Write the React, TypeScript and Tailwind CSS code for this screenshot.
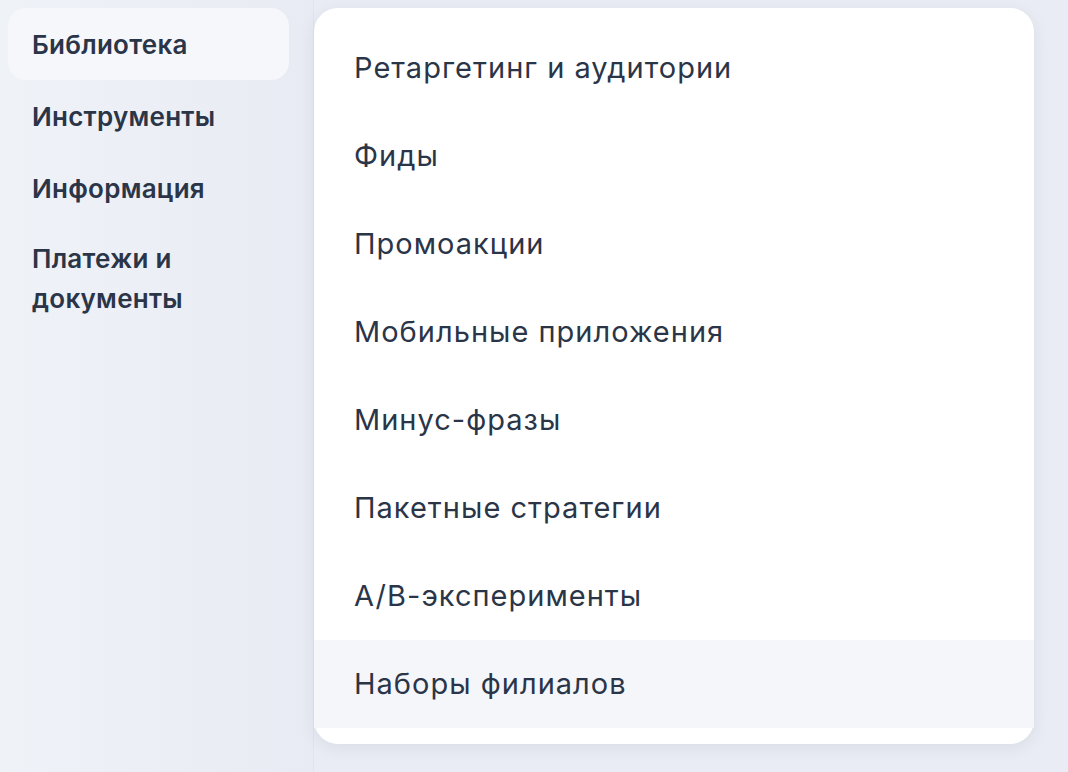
import React from "react";

const side = ["Библиотека", "Инструменты", "Информация"];
const items = [
  "Ретаргетинг и аудитории",
  "Фиды",
  "Промоакции",
  "Мобильные приложения",
  "Минус-фразы",
  "Пакетные стратегии",
  "A/B-эксперименты",
  "Наборы филиалов",
];

export default function App() {
  return (
    <div
      className="flex h-[772px] w-[1068px] overflow-hidden bg-[#e9ecf4] text-[#2b3548]"
      style={{ fontFamily: "Inter, 'Noto Sans', sans-serif" }}
    >
      <aside className="flex w-[314px] shrink-0 flex-col border-r border-[#e0e4ec] bg-gradient-to-r from-[#eff2f7] to-[#e8ebf3] p-2 pr-6">
        {side.map((s, i) => (
          <div
            key={s}
            className={
              "flex h-[72px] items-center rounded-[18px] px-6 text-[26px] font-semibold tracking-[0.01em] " +
              (i === 0 ? "bg-[#f5f7fb]" : "")
            }
          >
            {s}
          </div>
        ))}
        <div className="px-6 pt-[15px] text-[26px] font-semibold leading-[40px] tracking-[0.01em]">
          Платежи и<br />документы
        </div>
      </aside>
      <main className="flex-1 pt-2 pr-[34px]">
        <div className="rounded-[24px] bg-white py-4 shadow-[0_4px_16px_rgba(40,50,80,0.08)]">
          {items.map((t, i) => (
            <div
              key={t}
              className={
                "flex h-[88px] items-center px-10 text-[29px] tracking-[0.035em] " +
                (i === items.length - 1 ? "bg-[#f5f6fa]" : "")
              }
            >
              {t}
            </div>
          ))}
        </div>
      </main>
    </div>
  );
}
